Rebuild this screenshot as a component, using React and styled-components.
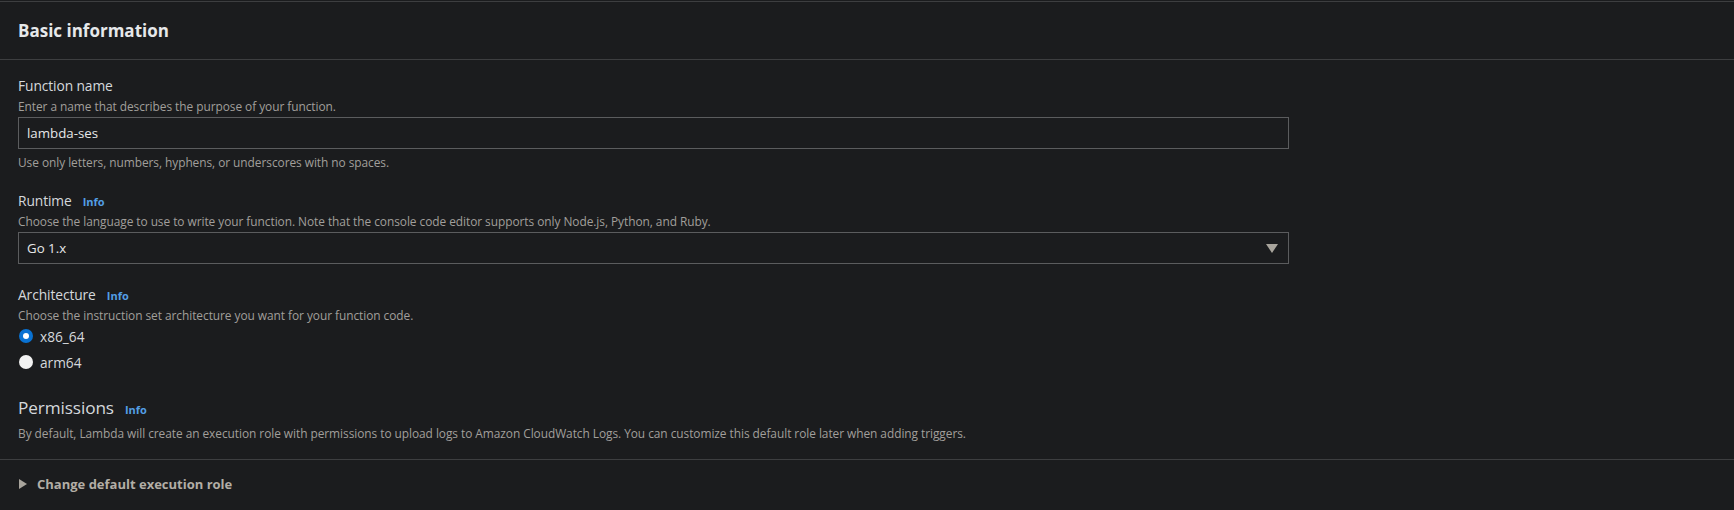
import React from "react";
import styled, { createGlobalStyle } from "styled-components";

const Global = createGlobalStyle`
  html, body { margin: 0; padding: 0; background: #1b1c1e; }
  body { font-family: "Open Sans", "Noto Sans", sans-serif; }
`;

const Page = styled.div`
  padding-top: 1px;
  background: #1b1c1e;
  width: 1734px;
  height: 509px;
  overflow: hidden;
`;

const Panel = styled.section`
  border-top: 1px solid #3d3e40;
`;

const Header = styled.header`
  height: 57px;
  border-bottom: 1px solid #3d3e40;
  display: flex;
  align-items: center;
  padding: 0 18px;
`;

const Title = styled.h2`
  margin: 0;
  font-size: 17px;
  font-weight: 700;
  color: #e6e8ea;
`;

const Body = styled.div`
  padding: 16px 18px 18px 18px;
  border-bottom: 1px solid #3d3e40;
`;

const Field = styled.div`
  display: flex;
  flex-direction: column;
  margin-top: ${(p) => p.$gap || 0}px;
`;

const LabelRow = styled.div`
  display: flex;
  align-items: baseline;
  gap: 11px;
  height: ${(p) => (p.$big ? 24 : 20)}px;
  line-height: ${(p) => (p.$big ? 24 : 20)}px;
`;

const Label = styled.span`
  font-size: ${(p) => (p.$big ? 17.2 : 13.8)}px;
  color: #d5d8dc;
  letter-spacing: -0.1px;
`;

const Info = styled.a`
  font-size: 11px;
  font-weight: 700;
  color: #539fe5;
  text-decoration: none;
`;

const Desc = styled.div`
  font-size: 11.9px;
  line-height: 16px;
  color: #a19f9b;
  margin-top: ${(p) => p.$mt ?? 2}px;
  letter-spacing: -0.05px;
`;

const InputBox = styled.div`
  box-sizing: border-box;
  width: 1271px;
  height: 32px;
  margin-top: 3px;
  border: 1px solid #5b5c5e;
  display: flex;
  align-items: center;
  justify-content: space-between;
  padding: 0 10px 0 8px;
  font-size: 13.3px;
  color: #e6e7e8;
`;

const Arrow = styled.svg`
  width: 12px;
  height: 9px;
`;

const RadioList = styled.div`
  display: flex;
  flex-direction: column;
`;

const RadioRow = styled.label`
  display: flex;
  align-items: center;
  height: 26px;
  gap: 7px;
  font-size: 13.7px;
  color: #d5d8dc;
`;

const RadioDot = styled.span`
  box-sizing: border-box;
  width: 14px;
  height: 14px;
  border-radius: 50%;
  margin-left: 1px;
  background: ${(p) => (p.$checked ? "#0972d3" : "#f2f2f2")};
  display: flex;
  align-items: center;
  justify-content: center;
  &::after {
    content: "";
    display: ${(p) => (p.$checked ? "block" : "none")};
    width: 6px;
    height: 6px;
    border-radius: 50%;
    background: #ffffff;
  }
`;

const Expander = styled.div`
  display: flex;
  align-items: center;
  gap: 10px;
  height: 20px;
  padding: 14px 19px;
  font-size: 13px;
  font-weight: 700;
  color: #b3aea6;
`;

const Caret = styled.svg`
  width: 8px;
  height: 10px;
`;

export default function App() {
  return (
    <>
      <Global />
      <Page>
        <Panel>
          <Header>
            <Title>Basic information</Title>
          </Header>
          <Body>
            <Field>
              <LabelRow>
                <Label>Function name</Label>
              </LabelRow>
              <Desc>Enter a name that describes the purpose of your function.</Desc>
              <InputBox>lambda-ses</InputBox>
              <Desc $mt={5}>Use only letters, numbers, hyphens, or underscores with no spaces.</Desc>
            </Field>
            <Field $gap={21}>
              <LabelRow>
                <Label>Runtime</Label>
                <Info>Info</Info>
              </LabelRow>
              <Desc>
                Choose the language to use to write your function. Note that the console code editor supports only
                Node.js, Python, and Ruby.
              </Desc>
              <InputBox>
                <span>Go 1.x</span>
                <Arrow viewBox="0 0 12 9">
                  <polygon points="0,0 12,0 6,9" fill="#a8a49c" />
                </Arrow>
              </InputBox>
            </Field>
            <Field $gap={21}>
              <LabelRow>
                <Label>Architecture</Label>
                <Info>Info</Info>
              </LabelRow>
              <Desc>Choose the instruction set architecture you want for your function code.</Desc>
              <RadioList>
                <RadioRow>
                  <RadioDot $checked />
                  x86_64
                </RadioRow>
                <RadioRow>
                  <RadioDot />
                  arm64
                </RadioRow>
              </RadioList>
            </Field>
            <Field $gap={21}>
              <LabelRow $big>
                <Label $big>Permissions</Label>
                <Info>Info</Info>
              </LabelRow>
              <Desc $mt={5}>
                By default, Lambda will create an execution role with permissions to upload logs to Amazon CloudWatch
                Logs. You can customize this default role later when adding triggers.
              </Desc>
            </Field>
          </Body>
          <Expander>
            <Caret viewBox="0 0 8 10">
              <polygon points="0,0 8,5 0,10" fill="#a8a49c" />
            </Caret>
            Change default execution role
          </Expander>
        </Panel>
      </Page>
    </>
  );
}
